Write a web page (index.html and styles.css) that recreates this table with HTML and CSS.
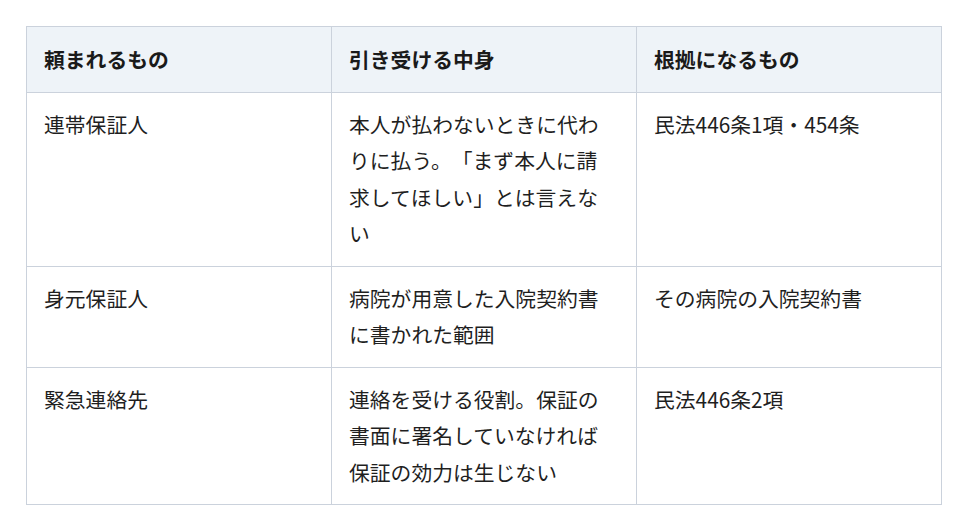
FILE: index.html
```html
<!DOCTYPE html>
<html lang="ja">
<head>
<meta charset="utf-8">
<link rel="stylesheet" href="styles.css">
</head>
<body>
<table class="tbl">
  <thead>
    <tr><th>頼まれるもの</th><th>引き受ける中身</th><th>根拠になるもの</th></tr>
  </thead>
  <tbody>
    <tr><td>連帯保証人</td><td>本人が払わないときに代わりに払う。「まず本人に請求してほしい」とは言えない</td><td>民法446条1項・454条</td></tr>
    <tr><td>身元保証人</td><td>病院が用意した入院契約書に書かれた範囲</td><td>その病院の入院契約書</td></tr>
    <tr><td>緊急連絡先</td><td>連絡を受ける役割。保証の書面に署名していなければ保証の効力は生じない</td><td>民法446条2項</td></tr>
  </tbody>
</table>
</body>
</html>
```
FILE: styles.css
```css
html, body { background: #fff; }
body {
  margin: 26px 26px;
  font-family: "Noto Sans CJK JP", "Noto Sans", sans-serif;
  color: #1f1f1f;
}
.tbl {
  width: 916px;
  table-layout: fixed;
  border-collapse: collapse;
  border: 1px solid #cbd2dc;
  font-size: 20.8px;
  line-height: 36.5px;
  text-spacing-trim: space-all;
}
.tbl th, .tbl td {
  border: 1px solid #cbd2dc;
  padding: 13px 22px 14px 17px;
  text-align: left;
  vertical-align: top;
}
.tbl th {
  padding-top: 14px;
  padding-bottom: 14px;
  background: #eef3f8;
  font-weight: 700;
  color: #1a1a1a;
}
```
